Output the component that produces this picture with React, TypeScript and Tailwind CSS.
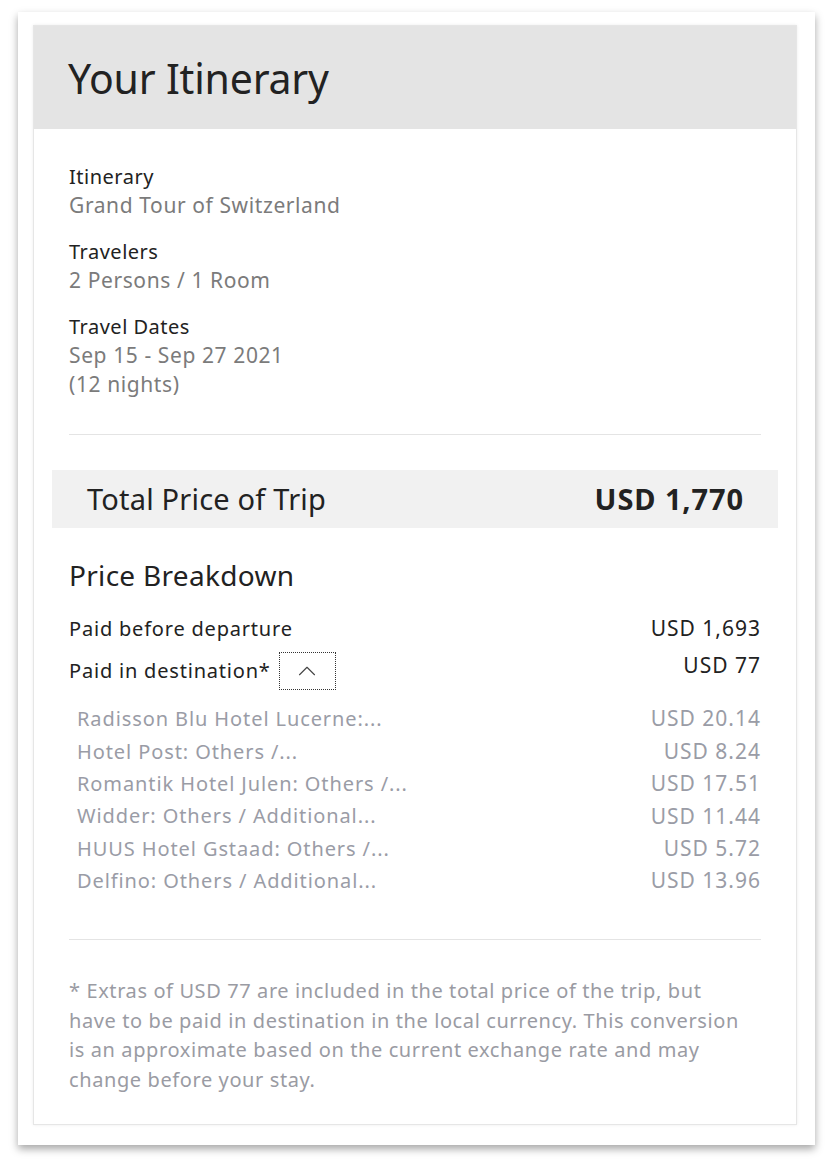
import { ChevronUp } from "lucide-react";

const extras = [
  { name: "Radisson Blu Hotel Lucerne:...", price: "USD 20.14" },
  { name: "Hotel Post: Others /...", price: "USD 8.24" },
  { name: "Romantik Hotel Julen: Others /...", price: "USD 17.51" },
  { name: "Widder: Others / Additional...", price: "USD 11.44" },
  { name: "HUUS Hotel Gstaad: Others /...", price: "USD 5.72" },
  { name: "Delfino: Others / Additional...", price: "USD 13.96" },
];

function Info({ label, lines }: { label: string; lines: string[] }) {
  return (
    <div className="flex flex-col">
      <span className="text-[20px] leading-[29px] tracking-[0.5px] text-[#222]">{label}</span>
      {lines.map((l) => (
        <span key={l} className="text-[21px] leading-[29px] tracking-[0.6px] text-[#7b7b7b]">{l}</span>
      ))}
    </div>
  );
}

export default function App() {
  return (
    <div className="w-[838px] h-[1164px] bg-white pt-[12px] pl-[18px] font-['Noto_Sans',sans-serif]">
      <div className="w-[797px] h-[1133px] bg-white shadow-[0_4px_8px_rgba(0,0,0,0.35)] pt-[13px] pl-[15px]">
        <div className="w-[764px] h-[1100px] bg-white border border-[#e6e6e6] shadow-[0_0_3px_rgba(0,0,0,0.08)] flex flex-col">
          <div className="h-[103px] bg-[#e4e4e4] flex items-center pl-[34px]">
            <h1 className="text-[41px] leading-[50px] text-[#222] tracking-[-0.2px]">Your Itinerary</h1>
          </div>

          <div className="px-[35px] pt-[33px] flex flex-col gap-[17px]">
            <Info label="Itinerary" lines={["Grand Tour of Switzerland"]} />
            <Info label="Travelers" lines={["2 Persons / 1 Room"]} />
            <Info label="Travel Dates" lines={["Sep 15 - Sep 27 2021", "(12 nights)"]} />
          </div>

          <div className="mx-[35px] mt-[35px] border-t border-[#e4e4e4]" />

          <div className="mx-[18px] mt-[35px] h-[58px] bg-[#f1f1f1] flex items-center justify-between pl-[35px] pr-[34px]">
            <span className="text-[29px] leading-[36px] tracking-[0.2px] text-[#222]">Total Price of Trip</span>
            <span className="text-[29px] leading-[36px] font-bold tracking-[0.9px] text-[#222]">USD 1,770</span>
          </div>

          <div className="px-[35px] pt-[30px] flex flex-col">
            <h2 className="text-[28px] leading-[34px] tracking-[0.3px] text-[#222]">Price Breakdown</h2>
            <div className="mt-[22px] flex justify-between items-center text-[20px] tracking-[0.8px] text-[#222] h-[30px]">
              <span>Paid before departure</span>
              <span className="text-[21px] tracking-[1px]">USD 1,693</span>
            </div>
            <div className="mt-[8px] flex justify-between items-start text-[20px] tracking-[0.8px] text-[#222]">
              <div className="flex items-center gap-[8px]">
                <span className="leading-[30px]">Paid in destination*</span>
                <button className="w-[57px] h-[38px] border border-dotted border-[#333] flex items-center justify-center">
                  <ChevronUp size={30} strokeWidth={0.9} className="text-[#444]" />
                </button>
              </div>
              <span className="text-[21px] leading-[26px] tracking-[1px]">USD 77</span>
            </div>
            <div className="mt-[13px] pl-[8px] flex flex-col">
              {extras.map((e) => (
                <div key={e.name} className="flex justify-between h-[32.4px] items-center text-[20px] tracking-[0.9px] text-[#9a9ca6]">
                  <span>{e.name}</span>
                  <span className="text-[21px] tracking-[1px]">{e.price}</span>
                </div>
              ))}
            </div>
          </div>

          <div className="mx-[35px] mt-[42px] border-t border-[#e4e4e4]" />

          <p className="px-[35px] pt-[36px] text-[20px] leading-[29.5px] tracking-[0.6px] text-[#9a9ba3]">
            * Extras of USD 77 are included in the total price of the trip, but
            <br />
            have to be paid in destination in the local currency. This conversion
            <br />
            is an approximate based on the current exchange rate and may
            <br />
            change before your stay.
          </p>
        </div>
      </div>
    </div>
  );
}
